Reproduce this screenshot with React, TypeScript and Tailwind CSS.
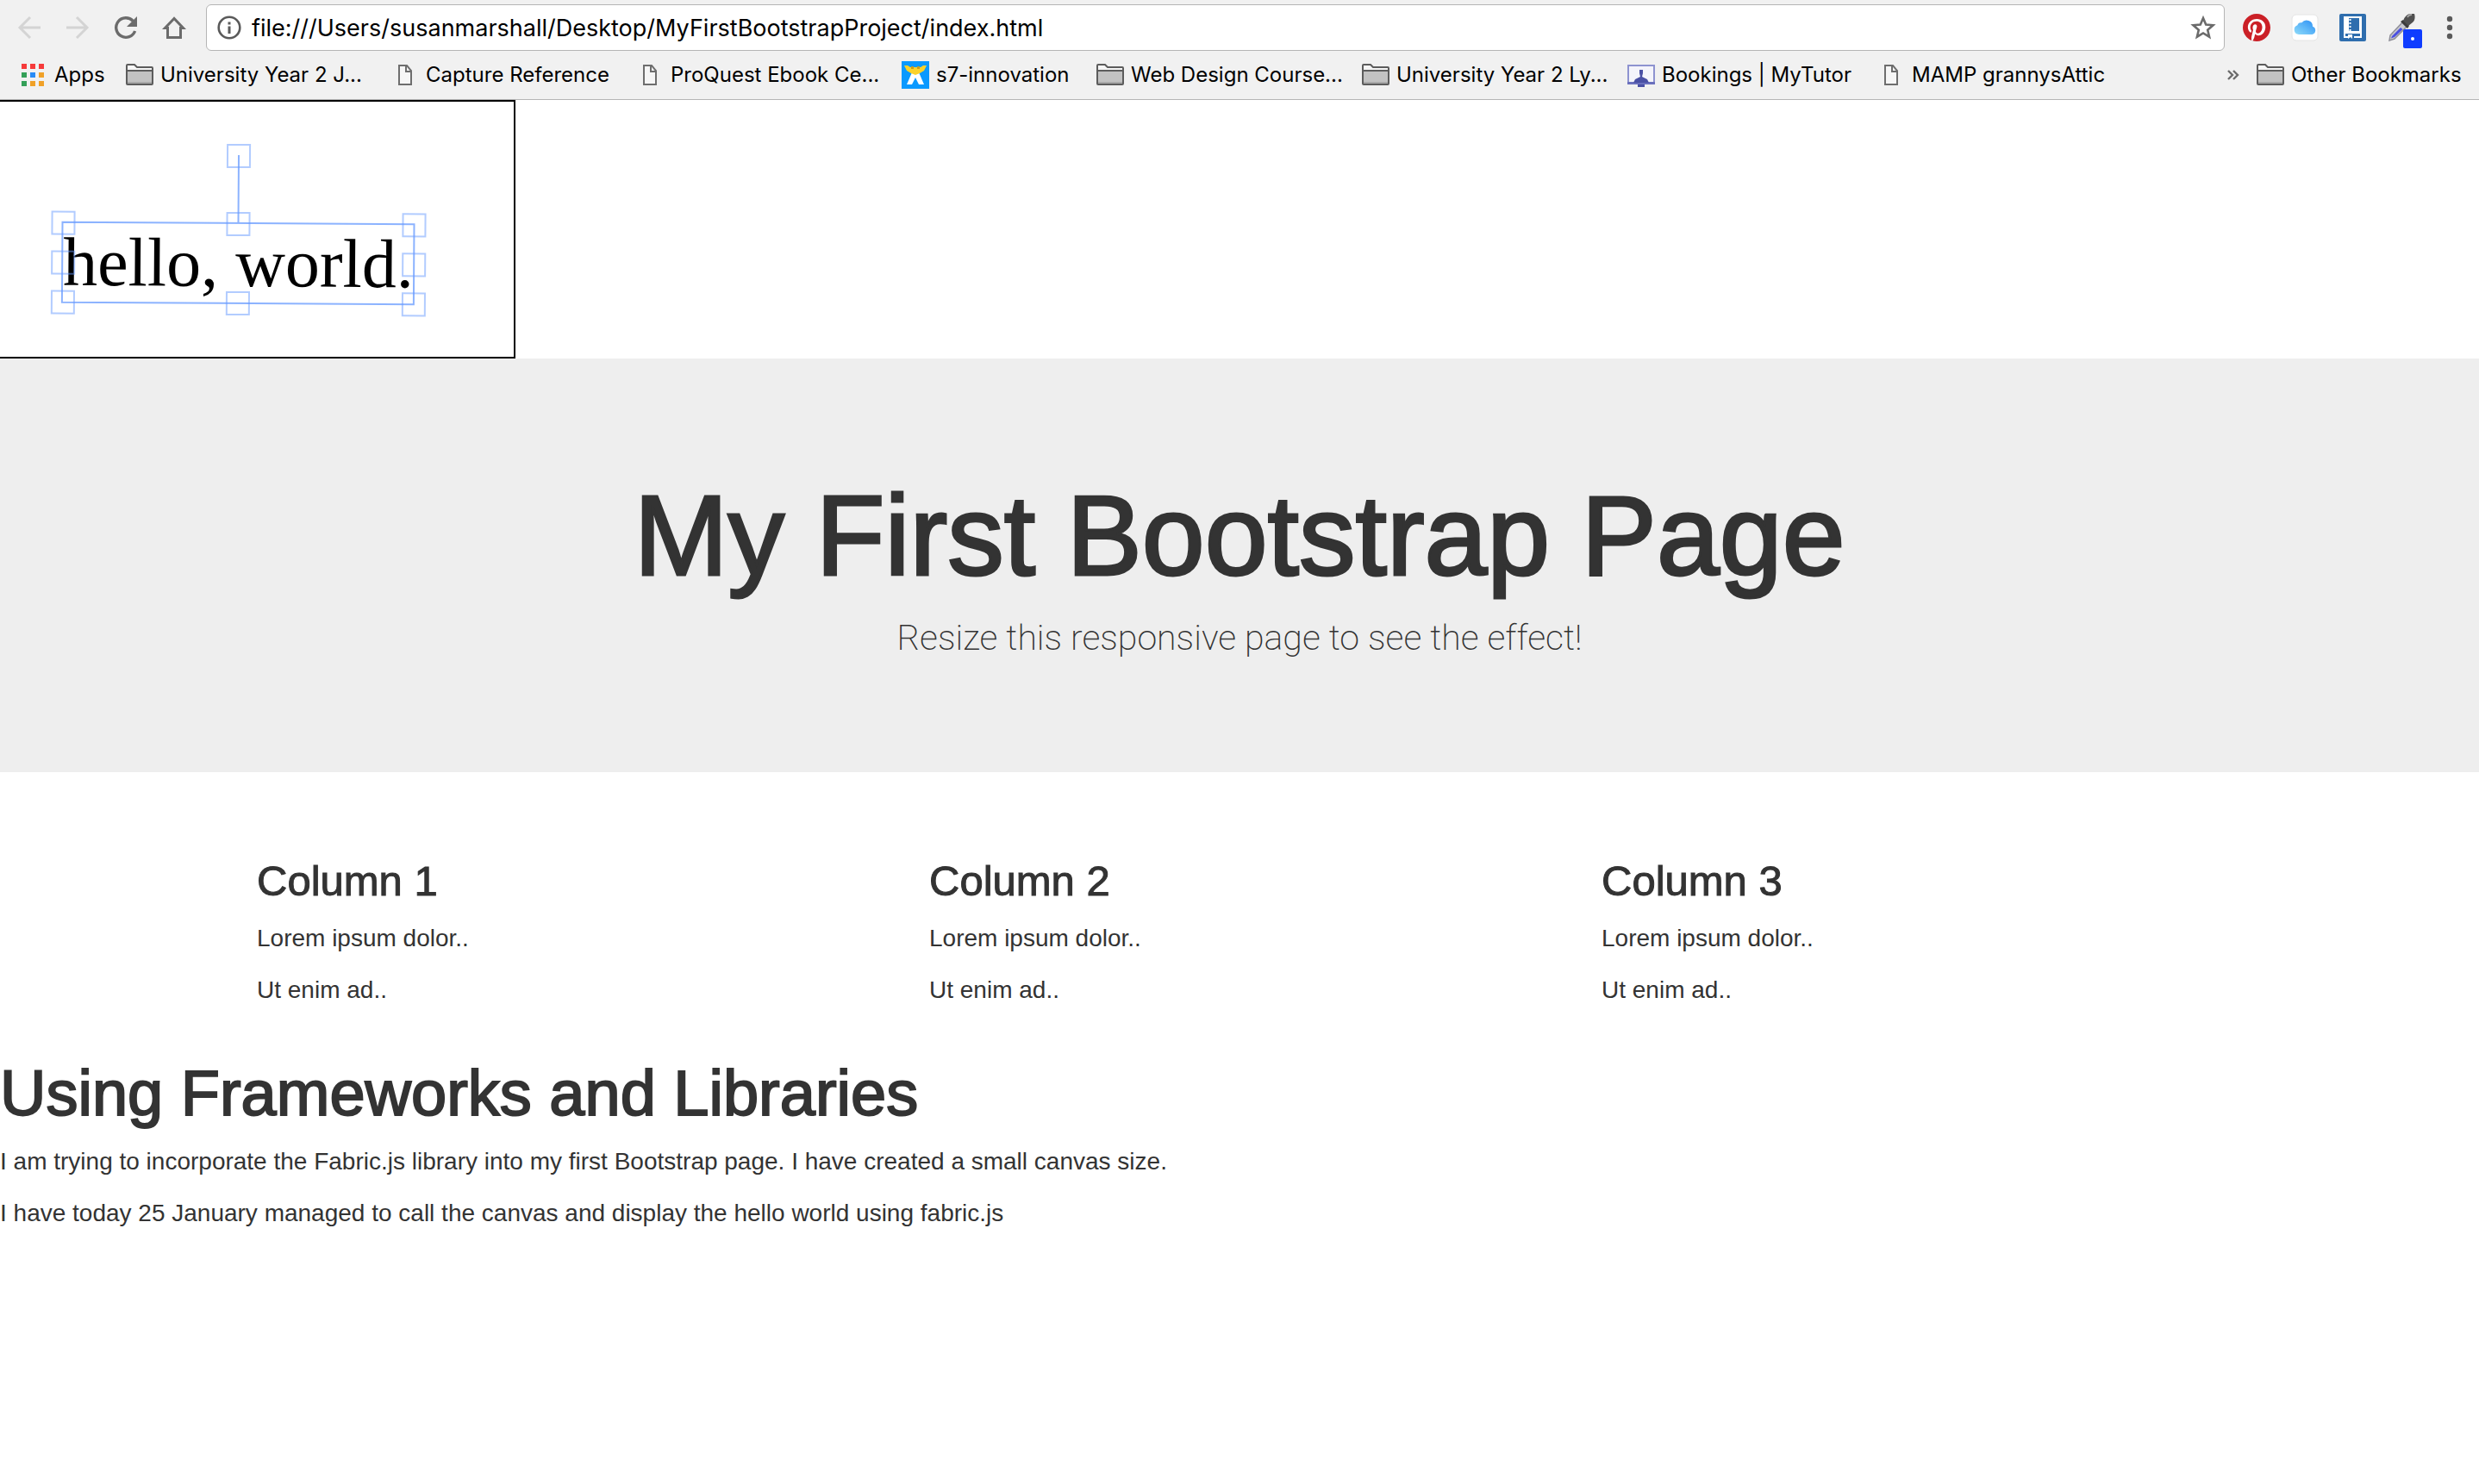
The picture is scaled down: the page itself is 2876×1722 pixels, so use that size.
import type { ReactNode } from "react";

function BackIcon() {
  return (
    <svg className="size-8" viewBox="0 0 32 32" fill="none" stroke="#d4d4d4" strokeWidth="3">
      <path d="M29 16H5M17 4 5 16l12 12" />
    </svg>
  );
}

function ForwardIcon() {
  return (
    <svg className="size-8" viewBox="0 0 32 32" fill="none" stroke="#d4d4d4" strokeWidth="3">
      <path d="M3 16h24M15 4l12 12-12 12" />
    </svg>
  );
}

function ReloadIcon() {
  return (
    <svg className="size-8" viewBox="0 0 32 32">
      <path d="M24.3 8.3A11.3 11.3 0 1 0 26.6 20" fill="none" stroke="#6b6b6b" strokeWidth="3.4" />
      <path d="M29 3v12H17z" fill="#6b6b6b" />
    </svg>
  );
}

function HomeIcon() {
  return (
    <svg className="size-8" viewBox="0 0 32 32">
      <path d="M16 5.500 5.500 16.500H8.500V27.500H23.500V16.500H26.500Z" fill="none" stroke="#6b6b6b" strokeWidth="3" />
    </svg>
  );
}

function InfoIcon() {
  return (
    <svg className="size-7 shrink-0" viewBox="0 0 28 28">
      <circle cx="14" cy="14" r="12.300" fill="none" stroke="#5a5a5a" strokeWidth="2.600" />
      <path d="M12.500 12.500h3V21h-3zM12.500 7.500h3v3h-3z" fill="#5a5a5a" />
    </svg>
  );
}

function StarIcon() {
  return (
    <svg className="size-8" viewBox="0 0 32 32">
      <path
        d="M16 5l3.200 7.600 8.300.700-6.300 5.400 1.900 8L16 22.400l-7.100 4.300 1.900-8-6.300-5.400 8.300-.700z"
        fill="none"
        stroke="#6b6b6b"
        strokeWidth="2.600"
      />
    </svg>
  );
}

function PinterestIcon() {
  return (
    <svg className="size-8" viewBox="0 0 24 24">
      <circle cx="12" cy="12" r="11.500" fill="#fff" />
      <path
        fill="#cb2027"
        d="M12 0C5.400 0 0 5.400 0 12c0 5.100 3.200 9.400 7.600 11.200-.1-.9-.2-2.400 0-3.400l1.400-6s-.4-.7-.4-1.800c0-1.700 1-2.900 2.200-2.900 1 0 1.500.8 1.500 1.700 0 1-.7 2.600-1 4-.3 1.200.6 2.200 1.800 2.200 2.100 0 3.800-2.200 3.800-5.500 0-2.900-2.100-4.900-5-4.900-3.400 0-5.400 2.600-5.400 5.200 0 1 .4 2.100.9 2.700.1.100.1.200.1.300l-.3 1.400c0 .2-.2.300-.4.200-1.500-.7-2.400-2.900-2.400-4.600 0-3.800 2.800-7.300 7.900-7.300 4.200 0 7.400 3 7.400 6.900 0 4.100-2.600 7.500-6.200 7.500-1.200 0-2.400-.6-2.800-1.400l-.7 2.900c-.3 1-1 2.300-1.500 3.100 1.100.3 2.300.5 3.500.5 6.600 0 12-5.400 12-12S18.600 0 12 0z"
      />
    </svg>
  );
}

function CloudIcon() {
  return (
    <svg className="size-8" viewBox="0 0 32 32">
      <defs>
        <linearGradient id="cloud" x1="0" y1="1" x2="1" y2="0">
          <stop offset="0" stopColor="#8fdcfa" />
          <stop offset="1" stopColor="#2a8ff5" />
        </linearGradient>
      </defs>
      <rect x="1" y="1" width="30" height="30" rx="5" fill="#fff" stroke="#e4e4e4" />
      <path
        d="M9 24a5.500 5.500 0 0 1-1.600-10.700 4.300 4.300 0 0 1 5-3 7 7 0 0 1 12.600 4.500A4.800 4.800 0 0 1 24.500 24z"
        fill="url(#cloud)"
      />
    </svg>
  );
}

function NotebookIcon() {
  return (
    <svg className="size-8" viewBox="0 0 32 32">
      <rect width="31" height="32" rx="2" fill="#2f6eae" />
      <path d="M5 3h21v25h-9v-2h7v-3H7v3h3v2H5z" fill="#fff" />
      <path d="M10 24h5v5l-2-2-3 2z" fill="#fff" />
      <path d="M11 5h12v15H11z" fill="#2f6eae" />
      <path d="M12.500 6v14" stroke="#fff" strokeWidth="2" strokeDasharray="2 2" />
    </svg>
  );
}

function DropperIcon() {
  return (
    <svg className="size-8" viewBox="0 0 32 32">
      <path d="M3 25 17 10l5 5L8 29l-6 2z" fill="#c9c9cf" stroke="#8f8f98" strokeWidth="1.500" />
      <path d="M5 26 15 16l2.500 2L8 27l-4 1.500z" fill="#4a4fe0" />
      <path d="M15 9l3-2 7 7-2 3z" fill="#3c3c3c" />
      <path d="M18 8c2-5 5-8 9-8h4c1 3 1 8-2 10l-5 4z" fill="#505050" />
      <path d="M23 4c1-2 3-3 5-3" stroke="#a8a8a8" strokeWidth="2" fill="none" />
    </svg>
  );
}

function DotsIcon() {
  return (
    <svg className="h-8 w-2" viewBox="0 0 8 32" fill="#5a5a5a">
      <circle cx="4" cy="6" r="3.200" />
      <circle cx="4" cy="16" r="3.200" />
      <circle cx="4" cy="26" r="3.200" />
    </svg>
  );
}

function AppsIcon() {
  const colors = [
    ["#f63b3b", "#f63b3b", "#f63b3b"],
    ["#34a058", "#2a8bf5", "#f0a128"],
    ["#34a058", "#f0a128", "#f0a128"],
  ];
  return (
    <svg className="size-[26px] shrink-0" viewBox="0 0 26 26">
      {colors.map((row, r) =>
        row.map((fill, c) => <rect key={`${r}-${c}`} x={c * 10} y={r * 10} width="6" height="6" fill={fill} />),
      )}
    </svg>
  );
}

function FolderIcon() {
  return (
    <svg className="size-8 shrink-0" viewBox="0 0 32 32">
      <path d="M1 5a1 1 0 0 1 1-1h8l3 3h17a1 1 0 0 1 1 1v19H1z" fill="#f6f6f6" />
      <path d="M1 11h30v16H1z" fill="#c2c2c2" />
      <path d="M1 24h30v3H1z" fill="#a8a8a8" />
      <path
        d="M1 5a1 1 0 0 1 1-1h8l3 3h17a1 1 0 0 1 1 1v18a1 1 0 0 1-1 1H2a1 1 0 0 1-1-1zM1 11h30"
        fill="none"
        stroke="#5c5c5c"
        strokeWidth="2"
      />
    </svg>
  );
}

function PageIcon() {
  return (
    <svg className="size-8 shrink-0" viewBox="0 0 32 32" fill="none" stroke="#6e6e6e" strokeWidth="2">
      <path d="M9 5h9l5 6v16H9z" fill="#f6f6f6" />
      <path d="M17 5v7h6" />
    </svg>
  );
}

function WixIcon() {
  return (
    <svg className="size-8 shrink-0" viewBox="0 0 32 32">
      <path d="M0 0h32v32H0z" fill="#0a99ff" />
      <path d="M12 13h8l6 14h-6l-4-8-4 8H6z" fill="#fff" />
      <path d="M3 5h4l3 2h12l3-2h4l-3 6-5 3-5 2-5-2-5-3z" fill="#fbd22b" />
      <path d="M11 6h3v3h-3zM18 6h3v3h-3z" fill="#c99a1c" />
    </svg>
  );
}

function TutorIcon() {
  return (
    <svg className="size-8 shrink-0" viewBox="0 0 32 32">
      <path d="M1 5h30v20H1z" fill="#f4f4fb" stroke="#8e93d0" strokeWidth="2" />
      <path d="M0 24h32v3H0z" fill="#6a70bd" />
      <path d="M14 10h4v4l-1 4 6 3 2 4H7l2-4 6-3-1-4zM12 27h8v3h-8z" fill="#4a50a5" />
    </svg>
  );
}

function ChevronsIcon() {
  return (
    <svg className="h-3 w-3.5" viewBox="0 0 14 12" fill="none" stroke="#6b6b6b" strokeWidth="2.400">
      <path d="M1 1l5 5-5 5M7 1l5 5-5 5" />
    </svg>
  );
}

function ToolButton({ label, children }: { label: string; children: ReactNode }) {
  return (
    <button type="button" aria-label={label} className="relative shrink-0">
      {children}
    </button>
  );
}

const bookmarks = [
  { label: "University Year 2 J...", icon: <FolderIcon />, width: "w-[308px]" },
  { label: "Capture Reference", icon: <PageIcon />, width: "w-[284px]" },
  { label: "ProQuest Ebook Ce...", icon: <PageIcon />, width: "w-[308px]" },
  { label: "s7-innovation", icon: <WixIcon />, width: "w-[226px]" },
  { label: "Web Design Course...", icon: <FolderIcon />, width: "w-[308px]" },
  { label: "University Year 2 Ly...", icon: <FolderIcon />, width: "w-[308px]" },
  { label: "Bookings | MyTutor", icon: <TutorIcon />, width: "w-[290px]" },
  { label: "MAMP grannysAttic", icon: <PageIcon />, width: "w-[270px]" },
];

function BrowserChrome() {
  return (
    <header className="border-b border-[#b5b5b5] bg-[#f1f1f1] pt-[5px] font-['Inter',sans-serif] text-black">
      <div className="flex items-center pr-[30px] pl-[18px]">
        <nav className="flex gap-6">
          <ToolButton label="Back"><BackIcon /></ToolButton>
          <ToolButton label="Forward"><ForwardIcon /></ToolButton>
          <ToolButton label="Reload"><ReloadIcon /></ToolButton>
          <ToolButton label="Home"><HomeIcon /></ToolButton>
        </nav>
        <div className="ml-[21px] flex h-[54px] min-w-0 flex-1 items-center rounded-md border border-[#b5b5b5] bg-white pr-2 pl-3">
          <InfoIcon />
          <input
            aria-label="Address"
            className="ml-3 min-w-0 flex-1 pt-0.5 text-[27px] leading-9 outline-none"
            defaultValue="file:///Users/susanmarshall/Desktop/MyFirstBootstrapProject/index.html"
          />
          <ToolButton label="Bookmark this page"><StarIcon /></ToolButton>
        </div>
        <div className="ml-[21px] flex items-center gap-6">
          <ToolButton label="Pinterest"><PinterestIcon /></ToolButton>
          <ToolButton label="iCloud"><CloudIcon /></ToolButton>
          <ToolButton label="Notebook"><NotebookIcon /></ToolButton>
          <ToolButton label="Colour picker">
            <DropperIcon />
            <span className="absolute -right-2 -bottom-2 flex size-[22px] items-center justify-center rounded-xs bg-[#0f3cff]">
              <span className="size-1 rounded-full bg-white" />
            </span>
          </ToolButton>
          <span className="ml-3 flex">
            <ToolButton label="Menu"><DotsIcon /></ToolButton>
          </span>
        </div>
      </div>
      <nav className="flex h-14 items-center pr-4 pl-[25px] text-[24px] leading-8 whitespace-nowrap">
        <a href="#" className="flex w-[121px] shrink-0 items-center gap-3">
          <AppsIcon />
          Apps
        </a>
        {bookmarks.map((b) => (
          <a key={b.label} href="#" className={`flex shrink-0 items-center gap-2 ${b.width}`}>
            {b.icon}
            {b.label}
          </a>
        ))}
        <button type="button" aria-label="More bookmarks" className="mr-5 ml-auto">
          <ChevronsIcon />
        </button>
        <a href="#" className="flex w-[242px] items-center gap-2">
          <FolderIcon />
          Other Bookmarks
        </a>
      </nav>
    </header>
  );
}

const handles = [
  [0, -79],
  [0, 0],
  [-203, 0],
  [204, 0],
  [-203, 46],
  [204, 46],
  [-203, 92],
  [0, 92],
  [204, 92],
];

function Canvas() {
  return (
    <div className="h-[300px] w-[598px] border-y-2 border-r-2 border-black bg-white">
      <svg className="h-full w-full" viewBox="0 2 596 296">
        <g transform="translate(276.500 143) rotate(0.370)">
          <text x="-203" y="73" fontSize="80" className="fill-black font-['Liberation_Serif',serif]">
            hello, world.
          </text>
          <g fill="none" stroke="#6699ff" strokeWidth="2">
            <path d="M-204 0h408v93h-408zM0 0v-79" strokeOpacity="0.750" />
            {handles.map(([x, y]) => (
              <rect key={`${x},${y}`} x={x - 13} y={y - 12} width="26" height="26" strokeOpacity="0.500" />
            ))}
          </g>
        </g>
      </svg>
    </div>
  );
}

export default function App() {
  return (
    <div className="min-h-screen bg-white font-['Liberation_Sans',Arial,sans-serif] text-[28px] leading-10 text-[#333]">
      <BrowserChrome />
      <main>
        <Canvas />
        <section className="mb-[60px] bg-[#eee] py-24 text-center">
          <h1 className="mt-10 mb-5 text-[131px] leading-[139px] [-webkit-text-stroke:3px_#333]">
            My First Bootstrap Page
          </h1>
          <p className="mb-[30px] font-['Roboto',sans-serif] text-[41px] leading-[59px] font-extralight">
            Resize this responsive page to see the effect!
          </p>
        </section>
        <div className="mx-auto grid max-w-[2340px] grid-cols-3">
          {[1, 2, 3].map((n) => (
            <section key={n} className="px-[30px]">
              <h3 className="mt-10 mb-5 text-[49px] leading-[53px] [-webkit-text-stroke:1px_#333]">Column {n}</h3>
              <p className="mb-5">Lorem ipsum dolor..</p>
              <p className="mb-5">Ut enim ad..</p>
            </section>
          ))}
        </div>
        <section>
          <h2 className="mt-10 mb-5 text-[74px] leading-[79px] [-webkit-text-stroke:2px_#333]">
            Using Frameworks and Libraries
          </h2>
          <p className="mb-5">
            I am trying to incorporate the Fabric.js library into my first Bootstrap page. I have created a small canvas
            size.
          </p>
          <p>I have today 25 January managed to call the canvas and display the hello world using fabric.js</p>
        </section>
      </main>
    </div>
  );
}
